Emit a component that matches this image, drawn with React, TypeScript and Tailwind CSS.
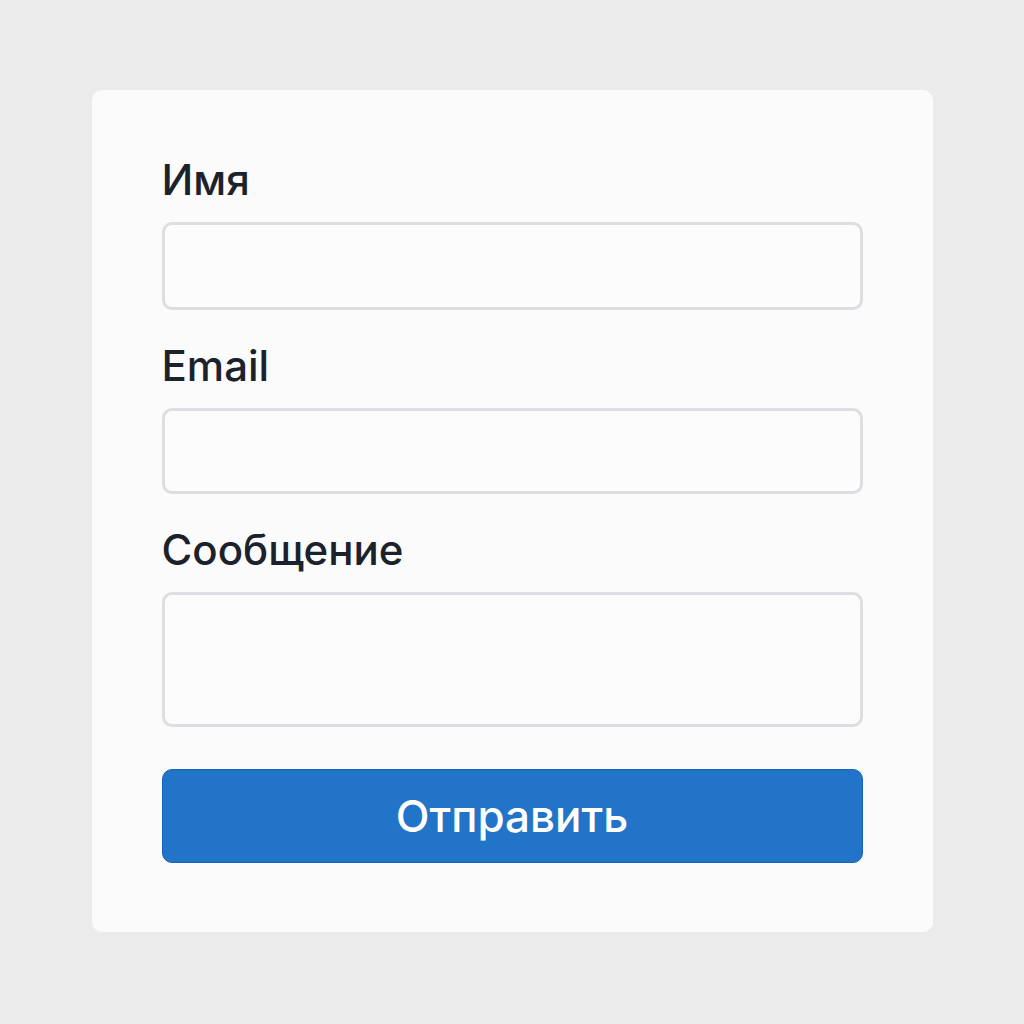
import React from 'react';

const fields = [
  { label: 'Имя', h: 'h-[88px]' },
  { label: 'Email', h: 'h-[86px]' },
];

const ContactForm = () => {
  return (
    <div className="min-h-screen bg-[#ebebeb] pt-[90px] font-['Inter','Noto_Sans',sans-serif]">
      <form className="mx-auto w-[841px] rounded-[10px] bg-[#fbfbfb] px-[70px] pt-[69px] pb-[69px]">
        {fields.map((f) => (
          <div key={f.label} className="mb-[35px]">
            <label className="mb-[21px] block text-[42px] leading-[42px] font-medium text-[#1c222b]">{f.label}</label>
            <input
              type="text"
              className={`block w-full ${f.h} rounded-[10px] border-[3px] border-[#dddee1] bg-[#fcfcfc] outline-none`}
            />
          </div>
        ))}
        <div className="mb-[42px]">
          <label className="mb-[21px] block text-[42px] leading-[42px] font-medium text-[#1c222b]">Сообщение</label>
          <textarea className="block h-[135px] w-full resize-none rounded-[10px] border-[3px] border-[#dddee1] bg-[#fcfcfc] outline-none" />
        </div>
        <button
          type="button"
          className="block h-[94px] w-full rounded-[10px] border border-[#1565c0] bg-[#2174c8] text-[44px] font-medium text-white"
        >
          Отправить
        </button>
      </form>
    </div>
  );
};

export default ContactForm;
